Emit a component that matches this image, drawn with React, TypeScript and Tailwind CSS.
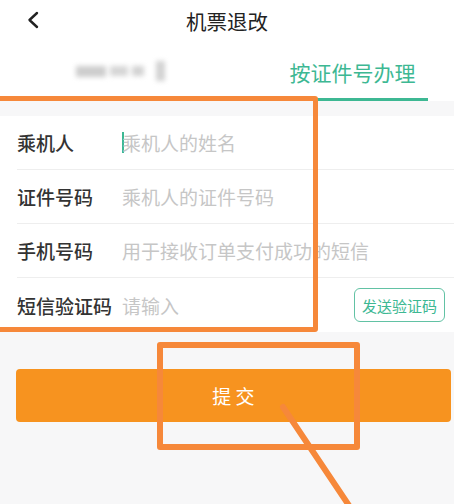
import React from 'react';

const rows = [
  { label: '乘机人', placeholder: '乘机人的姓名', cursor: true },
  { label: '证件号码', placeholder: '乘机人的证件号码' },
  { label: '手机号码', placeholder: '用于接收订单支付成功的短信' },
  { label: '短信验证码', placeholder: '请输入', code: true },
];

const font = { fontFamily: '"Noto Sans CJK SC", "Noto Sans", sans-serif' };

const App: React.FC = () => {
  return (
    <div className="relative w-[454px] h-[504px] overflow-hidden bg-[#f7f7f8]" style={font}>
      {/* Header */}
      <div className="relative h-[42px] bg-white flex items-center justify-center">
        <svg className="absolute left-[26px] top-[11px]" width="14" height="18" viewBox="0 0 14 18">
          <path d="M11 2 L3.5 9 L11 16" fill="none" stroke="#222" strokeWidth="2.4" strokeLinecap="round" strokeLinejoin="round" />
        </svg>
        <span className="text-[20.5px] text-[#222] leading-none">机票退改</span>
      </div>

      {/* Tabs */}
      <div className="h-[59px] bg-white flex">
        <div className="w-1/2 flex items-start justify-center pt-[19px]">
          <div className="flex items-center gap-[4px] blur-[2.5px] ml-[14px]">
            <div className="w-[30px] h-[11px] bg-[#cdcdcd]" />
            <div className="w-[18px] h-[10px] bg-[#d6d6d6]" />
            <div className="w-[12px] h-[10px] bg-[#d3d3d3]" />
            <div className="w-[9px] h-[20px] bg-[#d2d2d2] ml-[8px]" />
          </div>
        </div>
        <div className="w-1/2 flex flex-col items-center justify-end">
          <span className="text-[21px] text-[#3db893] leading-none pb-[15px] pl-[24px]">按证件号办理</span>
          <div className="h-[3px] w-[150px] bg-[#3db893] ml-[25px]" />
        </div>
      </div>

      {/* Form */}
      <div className="mt-[15px] bg-white">
        {rows.map((r, i) => (
          <div key={r.label} className="h-[54px] pl-[17px] flex">
            <div className={`flex-1 flex items-center pr-[9px] ${i < rows.length - 1 ? 'border-b border-[#eeeeee]' : ''}`}>
              <span className="w-[105px] text-[19px] font-medium text-[#333] leading-none">{r.label}</span>
              {r.cursor && <span className="w-[2px] h-[21px] bg-[#3db893] -mr-[2px]" />}
              <span className="flex-1 text-[19px] text-[#c6c6c6] leading-none">{r.placeholder}</span>
              {r.code && (
                <span className="h-[34px] px-[7px] flex items-center border border-[#62c2a4] rounded-[6px] text-[15px] text-[#3db893] leading-none">
                  发送验证码
                </span>
              )}
            </div>
          </div>
        ))}
      </div>

      {/* Submit */}
      <div className="mt-[37px] ml-[16px] mr-[3px] h-[53px] rounded-[4px] bg-[#f7931f] flex items-center justify-center">
        <span className="text-[19px] text-white leading-none">提 交</span>
      </div>

      {/* Annotations */}
      <div className="absolute left-[-10px] top-[96px] w-[328px] h-[236px] border-[5px] border-[#f6883a] rounded-[3px]" />
      <div className="absolute left-[157px] top-[342px] w-[203px] h-[108px] border-[6px] border-[#f6883a] rounded-[3px]" />
      <svg className="absolute left-0 top-0" width="454" height="504" viewBox="0 0 454 504">
        <line x1="283" y1="407" x2="352" y2="510" stroke="#f6883a" strokeWidth="6" strokeLinecap="round" />
      </svg>
    </div>
  );
};

export default App;
